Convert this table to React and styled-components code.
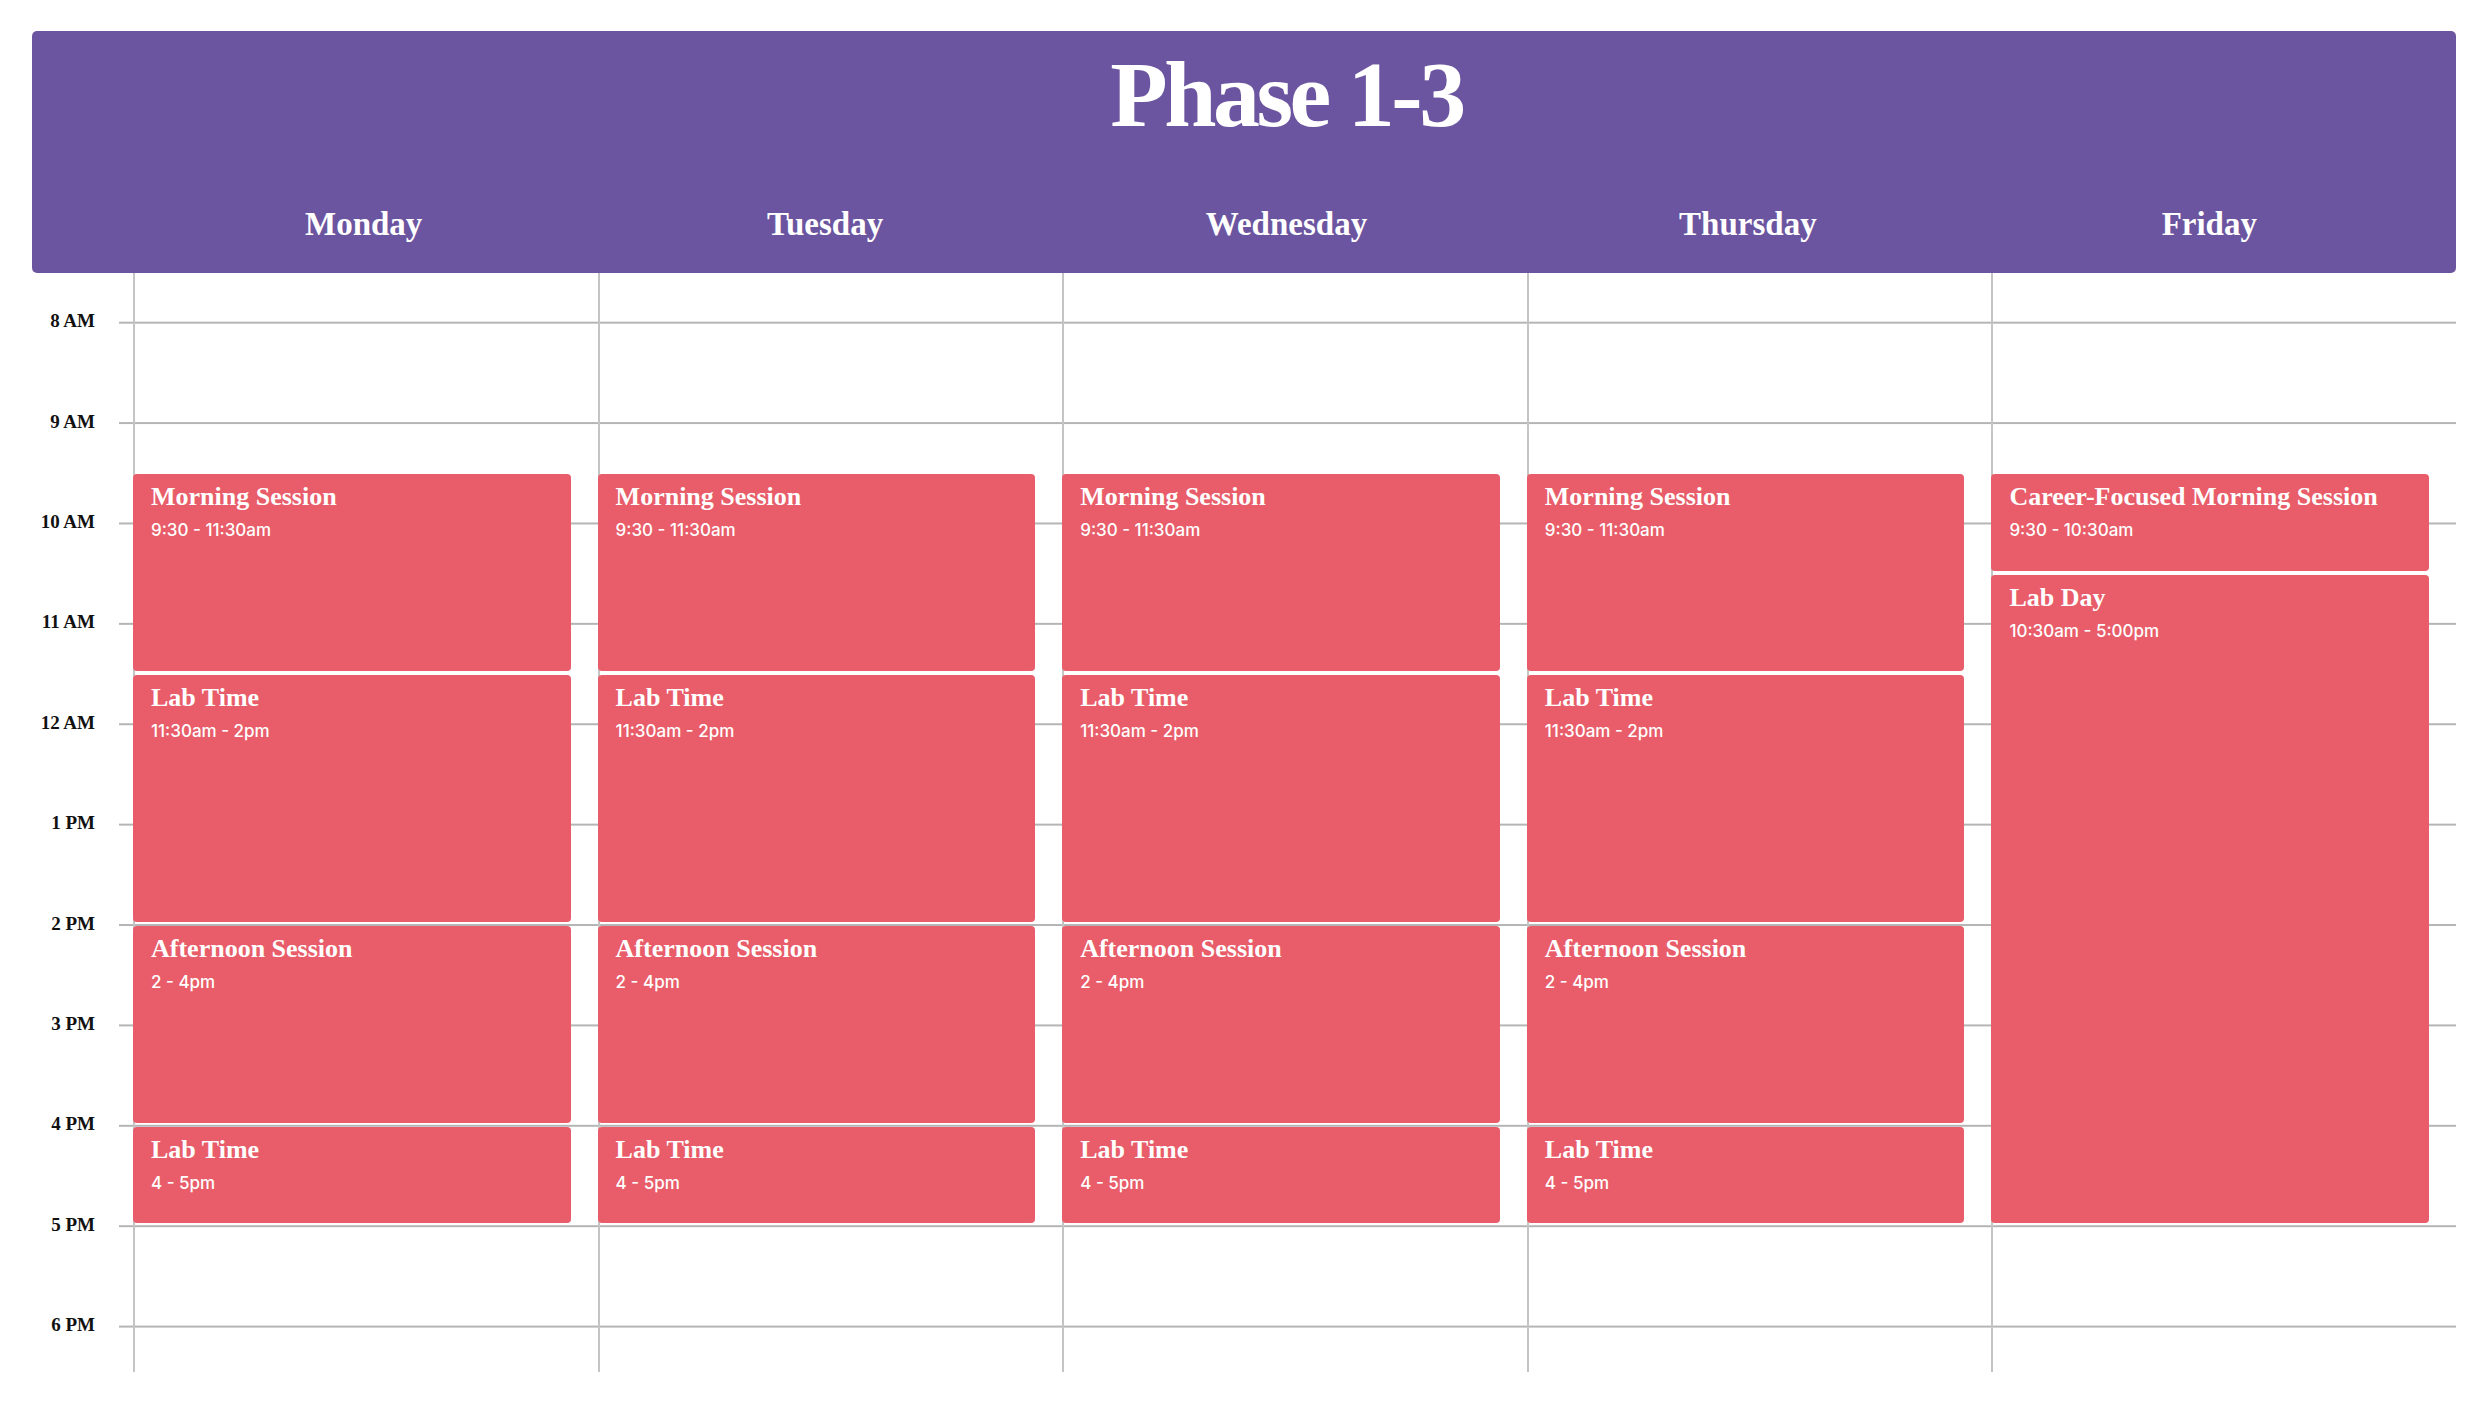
import React from 'react';
import styled, { createGlobalStyle } from 'styled-components';

const HOUR = 100.4;     // px per hour on the board
const FIRST_HOUR = 8;

const GlobalStyle = createGlobalStyle`
    body {
        margin: 0;
        background: #fff;
    }
`;

const Page = styled.div`
    padding: 31px 24px 0 32px;
`;

const Header = styled.header`
    display: flex;
    flex-direction: column;
    height: 242px;
    box-sizing: border-box;
    padding: 16px 16px 0 101px;
    background: #6c55a0;
    border-radius: 5px;
    color: #fff;
    font-family: "Liberation Serif", serif;
    font-weight: 700;
`;

const Title = styled.h1`
    margin: 0;
    font-size: 94px;
    line-height: 1;
    letter-spacing: -3.5px;
    text-align: center;
`;

const DayRow = styled.div`
    display: grid;
    grid-template-columns: repeat(5, 1fr);
    margin-top: 67px;
`;

const DayName = styled.div`
    font-size: 33px;
    line-height: 1;
    text-align: center;
`;

const Board = styled.div`
    display: grid;
    grid-template-columns: 101px repeat(5, 1fr);
    height: 1099px;
    background-image: linear-gradient(#b5b5b5 0 2px, transparent 2px);
    background-size: calc(100% - 87px) ${HOUR}px;
    background-position: 87px 48.7px;
    background-repeat: repeat-y;
`;

const TimeAxis = styled.div`
    display: flex;
    flex-direction: column;
    margin-top: -2px;
    padding-right: 38px;
`;

const TimeLabel = styled.div`
    flex: none;
    height: ${HOUR}px;
    display: flex;
    align-items: center;
    justify-content: flex-end;
    font-family: "Liberation Serif", serif;
    font-weight: 700;
    font-size: 19px;
    color: #111;
`;

const DayColumn = styled.div`
    display: grid;
    grid-template-rows: 49.7px repeat(20, ${HOUR / 2}px) 1fr;
    padding-right: 27px;
    box-shadow: inset 2px 0 0 #c4c4c4;
`;

const Event = styled.div`
    grid-row: ${p => p.$from} / ${p => p.$to};
    margin: 1px 0 3px;
    padding: 7px 18px;
    background: #e85d69;
    border-radius: 4px;
    color: #fff;
    overflow: hidden;
`;

const EventTitle = styled.div`
    font-family: "Liberation Serif", serif;
    font-weight: 700;
    font-size: 26px;
    line-height: 1.2;
    white-space: nowrap;
`;

const EventTime = styled.div`
    margin-top: 7px;
    font-family: Inter, "Liberation Sans", sans-serif;
    font-weight: 500;
    font-size: 17px;
    line-height: 1.3;
`;

const hours = ['8 AM', '9 AM', '10 AM', '11 AM', '12 AM', '1 PM', '2 PM', '3 PM', '4 PM', '5 PM', '6 PM'];

const regularDay = [
    { title: 'Morning Session', time: '9:30 - 11:30am', start: 9.5, end: 11.5 },
    { title: 'Lab Time', time: '11:30am - 2pm', start: 11.5, end: 14 },
    { title: 'Afternoon Session', time: '2 - 4pm', start: 14, end: 16 },
    { title: 'Lab Time', time: '4 - 5pm', start: 16, end: 17 },
];

const days = [
    { name: 'Monday', events: regularDay },
    { name: 'Tuesday', events: regularDay },
    { name: 'Wednesday', events: regularDay },
    { name: 'Thursday', events: regularDay },
    {
        name: 'Friday',
        events: [
            { title: 'Career-Focused Morning Session', time: '9:30 - 10:30am', start: 9.5, end: 10.5 },
            { title: 'Lab Day', time: '10:30am - 5:00pm', start: 10.5, end: 17 },
        ],
    },
];

// grid line for a given hour (half-hour rows, first row is the gap above 8 AM)
const rowLine = h => 2 + (h - FIRST_HOUR) * 2;

export default function App() {
    return (
        <Page>
            <GlobalStyle />
            <Header>
                <Title>Phase 1-3</Title>
                <DayRow>
                    {days.map(d => <DayName key={d.name}>{d.name}</DayName>)}
                </DayRow>
            </Header>
            <Board>
                <TimeAxis>
                    {hours.map(h => <TimeLabel key={h}>{h}</TimeLabel>)}
                </TimeAxis>
                {days.map(d => (
                    <DayColumn key={d.name}>
                        {d.events.map((e, i) => (
                            <Event key={i} $from={rowLine(e.start)} $to={rowLine(e.end)}>
                                <EventTitle>{e.title}</EventTitle>
                                <EventTime>{e.time}</EventTime>
                            </Event>
                        ))}
                    </DayColumn>
                ))}
            </Board>
        </Page>
    );
}
